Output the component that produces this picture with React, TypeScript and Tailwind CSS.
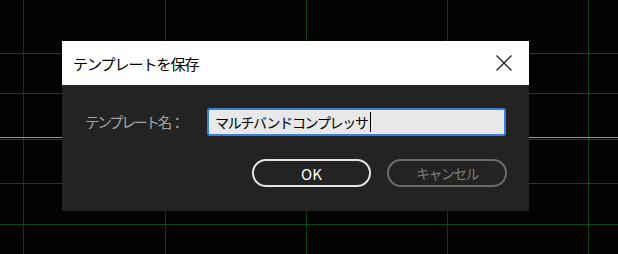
import React from "react";

const Grid = () => {
  const xs = [23, 165, 306, 447, 588];
  const ys = [53, 93, 139, 183, 224];
  return (
    <svg className="absolute inset-0" width="618" height="254" viewBox="0 0 618 254">
      {xs.map((x) => (
        <rect key={"x" + x} x={x} y={0} width={1} height={254} fill="#0a3f0a" />
      ))}
      {ys.map((y) => (
        <rect key={"y" + y} x={0} y={y} width={618} height={1} fill="#0c4c0c" />
      ))}
      <rect x={0} y={137} width={618} height={1} fill="#8c9c8c" />
    </svg>
  );
};

export default function App() {
  return (
    <div
      className="relative w-[618px] h-[254px] overflow-hidden bg-[#030303]"
      style={{ fontFamily: '"Noto Sans CJK JP", "Noto Sans", sans-serif' }}
    >
      <Grid />
      <div className="absolute left-[62px] top-[41px] w-[467px] h-[170px] flex flex-col bg-[#232323]">
        <div className="h-[44px] bg-white flex items-center justify-between pl-[11px] pr-[17px]">
          <span className="text-[15px] leading-none tracking-[-1px] text-black">テンプレートを保存</span>
          <svg width="16" height="16" viewBox="0 0 16 16">
            <path d="M0.5 0.5 L15.5 15.5 M15.5 0.5 L0.5 15.5" stroke="#111" strokeWidth="1.1" fill="none" />
          </svg>
        </div>
        <div className="flex-1 flex flex-col pt-[23px] pl-[23px] pr-[23px]">
          <div className="flex items-center h-[28px]">
            <span className="w-[122px] text-[14.5px] leading-none tracking-[-2.3px] text-[#a3a3a3]">テンプレート名：</span>
            <div className="flex-1 h-[28px] border-2 border-[#3a80d6] rounded-[3px] bg-[#e8e8e8] flex items-center pl-[6px]">
              <span className="text-[14px] leading-none tracking-[-1.3px] text-black">マルチバンドコンプレッサ</span>
              <span className="ml-[2px] w-px h-[20px] bg-black" />
            </div>
          </div>
          <div className="flex justify-end gap-[16px] mt-[23px] -mr-px">
            <div className="w-[119px] h-[28px] border-2 border-[#e4e4e4] rounded-full flex items-center justify-center text-[15px] leading-none text-white">
              OK
            </div>
            <div className="w-[120px] h-[28px] border-2 border-[#6b6b6b] rounded-full flex items-center justify-center text-[14px] leading-none tracking-[-1.6px] text-[#7c7c7c]">
              キャンセル
            </div>
          </div>
        </div>
      </div>
    </div>
  );
}
